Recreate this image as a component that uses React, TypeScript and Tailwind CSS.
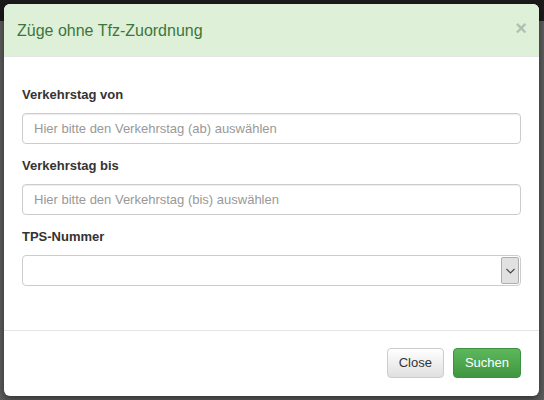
import React from 'react';

export default function App() {
  const fields = [
    { label: 'Verkehrstag von', placeholder: 'Hier bitte den Verkehrstag (ab) auswählen' },
    { label: 'Verkehrstag bis', placeholder: 'Hier bitte den Verkehrstag (bis) auswählen' },
  ];

  return (
    <div className="relative w-[544px] h-[400px] overflow-hidden font-['Liberation_Sans',Arial,sans-serif] text-[13px] text-[#333]">
      {/* page behind the backdrop */}
      <div className="flex flex-col h-full">
        <div className="h-[21px] bg-[#1b1b1b]"></div>
        <div className="flex-1 bg-[#5e5e5e]"></div>
      </div>

      {/* Modal dialog */}
      <div className="absolute left-[4px] top-[4px] w-[535px] h-[392px] bg-white rounded-[6px] overflow-hidden shadow-[0_3px_9px_rgba(0,0,0,0.5)] flex flex-col">
        {/* Header */}
        <div className="h-[53px] bg-[#dff0d8] border-b border-[#e5e5e5] flex items-center justify-between pl-[13px] pr-[12px]">
          <h4 className="text-[16px] leading-[25px] text-[#3c763d] mt-[1px]">Züge ohne Tfz-Zuordnung</h4>
          <span className="text-[20px] font-bold leading-none text-black opacity-20 -mt-[5px]">×</span>
        </div>

        {/* Body */}
        <div className="flex-1 px-[18px] pt-[28px]">
          {fields.map((f) => (
            <div key={f.label} className="mb-[12px]">
              <label className="block font-bold leading-[20px] mb-[8px]">{f.label}</label>
              <input
                className="w-full h-[31px] border border-[#ccc] rounded-[4px] pl-[11px] text-[13px] placeholder:text-[#999] shadow-[inset_0_1px_1px_rgba(0,0,0,0.075)] outline-none"
                placeholder={f.placeholder}
              />
            </div>
          ))}
          <div>
            <label className="block font-bold leading-[20px] mb-[8px]">TPS-Nummer</label>
            <div className="w-full h-[31px] border border-[#ccc] rounded-[4px] flex justify-end items-stretch p-px">
              <div className="w-[18px] bg-[#e1e1e1] border border-[#adadad] rounded-[2px] flex items-center justify-center">
                <svg width="9" height="6" viewBox="0 0 9 6" fill="none">
                  <path d="M0.5 1L4.5 5L8.5 1" stroke="#444" strokeWidth="1.1" />
                </svg>
              </div>
            </div>
          </div>
        </div>

        {/* Footer */}
        <div className="border-t border-[#e5e5e5] h-[66px] flex justify-end items-start pt-[17px] pr-[18px] gap-[9px]">
          <button className="h-[30px] px-[11px] border border-[#ccc] rounded-[4px] bg-gradient-to-b from-white to-[#e0e0e0] text-[#333] text-[13px]">
            Close
          </button>
          <button className="h-[30px] px-[11px] border border-[#3e8f3e] rounded-[4px] bg-gradient-to-b from-[#5cb85c] to-[#419641] text-white text-[13px]">
            Suchen
          </button>
        </div>
      </div>
    </div>
  );
}
